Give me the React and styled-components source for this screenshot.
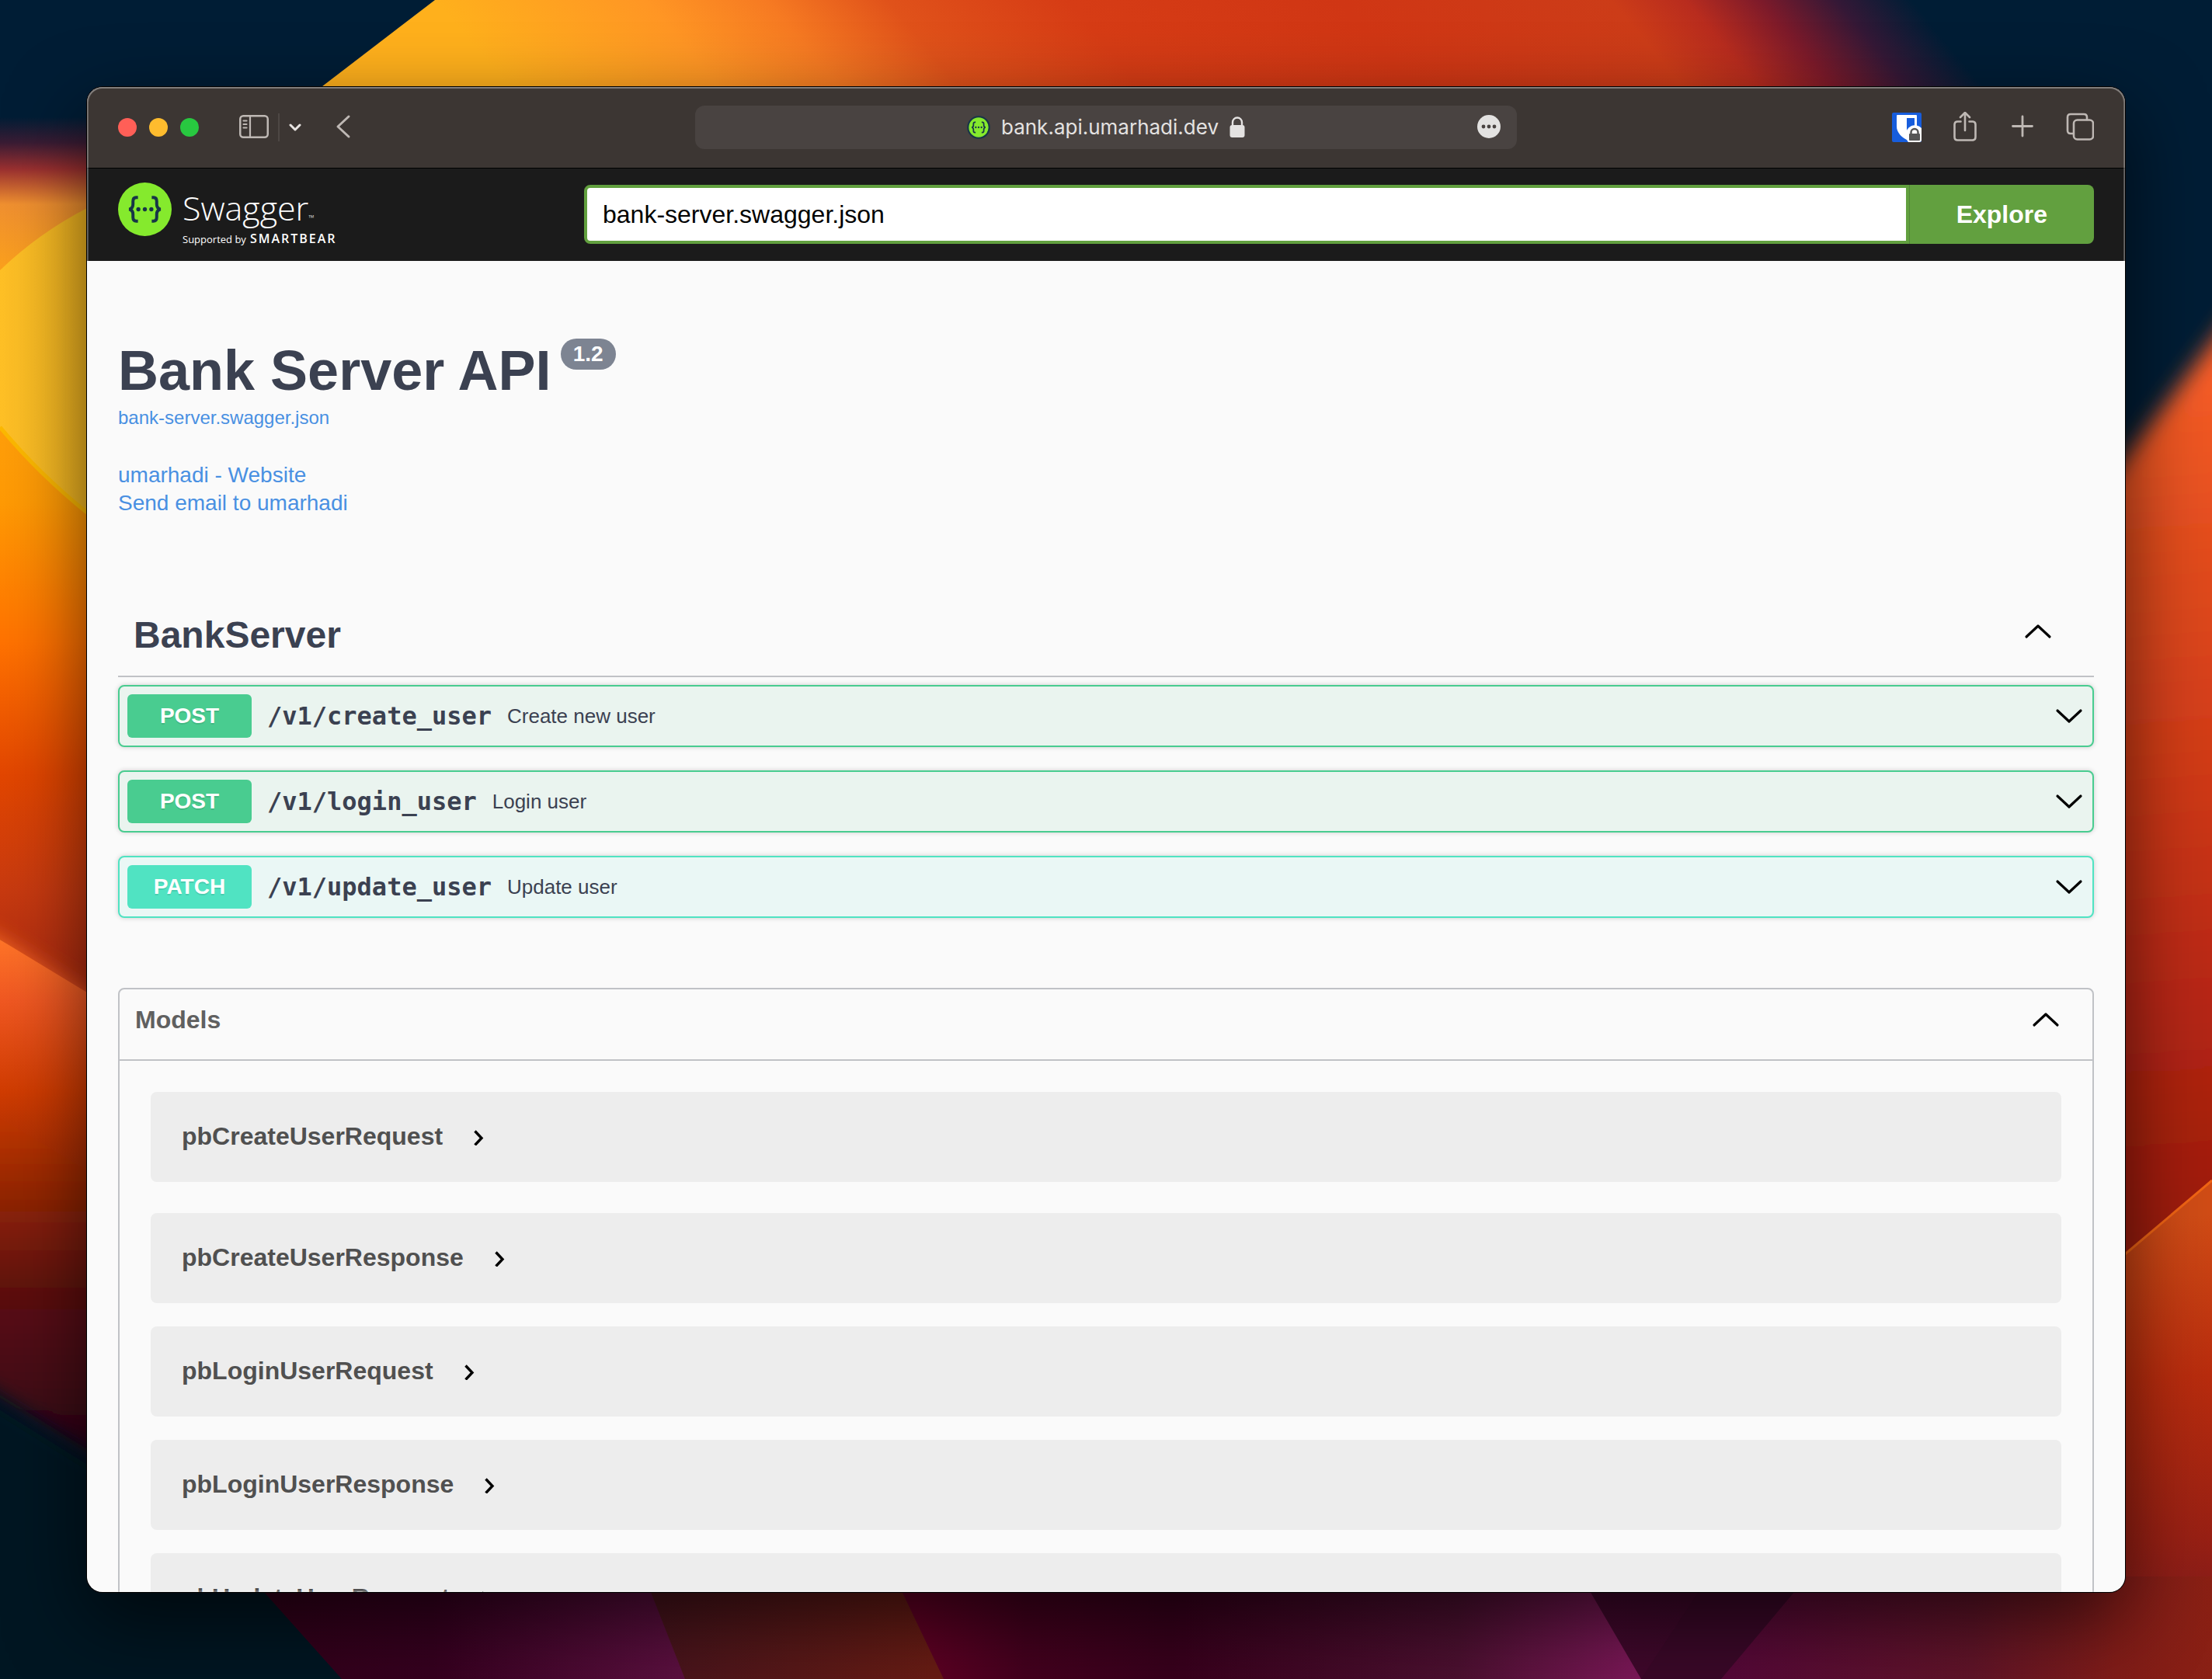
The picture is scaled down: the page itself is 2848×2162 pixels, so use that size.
import React from "react";
import styled, { createGlobalStyle } from "styled-components";

const sans = '"Liberation Sans", Arial, Helvetica, sans-serif';
const mono = '"DejaVu Sans Mono", Menlo, monospace';
const brand = '"Open Sans", "Noto Sans", sans-serif';

const GlobalStyle = createGlobalStyle`
  *, *::before, *::after { box-sizing: border-box; }
  body { margin: 0; background: #001d35; font-family: ${sans}; overflow: hidden; }
  h1, h2, h3 { margin: 0; }
  button { font: inherit; color: inherit; border: 0; padding: 0; background: none; cursor: pointer; }
  svg { display: block; flex: none; }
`;

/* ---------- desktop ---------- */

const Desktop = styled.div`
  position: relative;
  display: flex;
  height: 100vh;
  padding: 112px;
`;

const WallpaperArt = styled.svg`
  position: absolute;
  inset: 0;
  width: 100%;
  height: 100%;
`;

function Fade({ id, stops, ...rest }) {
  return (
    <linearGradient id={id} gradientUnits="userSpaceOnUse" {...rest}>
      {stops.map(([offset, color]) => (
        <stop key={offset} offset={offset} stopColor={color} />
      ))}
    </linearGradient>
  );
}

function Wallpaper() {
  return (
    <WallpaperArt viewBox="0 0 2848 2162" preserveAspectRatio="xMidYMid slice" aria-hidden="true">
      <defs>
        <Fade id="dune" x1="560" y1="0" x2="2500" y2="0" gradientTransform="skewX(40)"
          stops={[[0, "#ffb01c"], [0.14, "#ff9624"], [0.22, "#f67a22"], [0.3, "#e0521a"], [0.42, "#d63c15"], [0.6, "#d03614"], [0.78, "#cc3c18"], [0.83, "#b82c1e"], [0.88, "#7c1a2a"], [0.93, "#341836"], [0.98, "#001d35"]]} />
        <Fade id="west" x1="0" y1="150" x2="0" y2="1280"
          stops={[[0, "#001d35"], [0.03, "#3a1c34"], [0.06, "#9a3030"], [0.1, "#f09030"], [0.2, "#ffa616"], [0.44, "#ff9a04"], [0.6, "#ff7200"], [0.75, "#e24600"], [0.88, "#c83a10"], [1, "#a82810"]]} />
        <Fade id="gold" x1="0" y1="0" x2="130" y2="0" stops={[[0, "#ffc026"], [1, "#f0b420"]]} />
        <Fade id="westLow" x1="0" y1="1210" x2="0" y2="1860"
          stops={[[0, "#ff7428"], [0.12, "#f05822"], [0.3, "#d03c02"], [0.5, "#942604"], [0.7, "#5c1010"], [0.9, "#420818"], [1, "#300418"]]} />
        <Fade id="east" x1="2720" y1="500" x2="2800" y2="1600"
          stops={[[0, "#f45c26"], [0.2, "#e24c1e"], [0.45, "#d03a18"], [0.7, "#b82812"], [1, "#9a1a10"]]} />
        <Fade id="eastLow" x1="2740" y1="1570" x2="2780" y2="2162"
          stops={[[0, "#d04c16"], [0.35, "#b82c0e"], [0.7, "#982014"], [1, "#701820"]]} />
        <Fade id="plumA" x1="340" y1="0" x2="880" y2="0" stops={[[0, "#32001a"], [0.4, "#36001f"], [1, "#5c1040"]]} />
        <Fade id="rust" x1="850" y1="0" x2="1200" y2="0" stops={[[0, "#48141c"], [1, "#681c14"]]} />
        <Fade id="plumB" x1="1180" y1="0" x2="2110" y2="0"
          stops={[[0, "#600024"], [0.15, "#44001e"], [0.35, "#38001c"], [0.75, "#4c1030"], [1, "#7c1858"]]} />
        <Fade id="plumC" x1="2050" y1="0" x2="2300" y2="0" stops={[[0, "#40082c"], [1, "#3c0828"]]} />
        <Fade id="plumD" x1="2230" y1="0" x2="2848" y2="0"
          stops={[[0, "#560838"], [0.5, "#601428"], [0.8, "#801c18"], [1, "#8a2014"]]} />
        <filter id="soft" x="-20%" y="-20%" width="140%" height="140%">
          <feGaussianBlur stdDeviation="14" />
        </filter>
      </defs>
      <rect width="2848" height="2162" fill="#001d35" />
      <rect y="1500" width="1200" height="662" fill="#001524" />
      <path d="M560 0H2848V200H299z" fill="url(#dune)" />
      <path d="M0 150H600V1600L0 1210z" fill="url(#west)" />
      <path d="M0 348Q50 300 112 268L400 200V800L112 658Q50 610 0 550z" fill="url(#gold)" />
      <path d="M0 550Q50 610 112 660" fill="none" stroke="#fcb800" strokeWidth="5" />
      <path d="M-60 1180 0 1210 600 1574V2174L0 1800-60 1760z" fill="url(#westLow)" filter="url(#soft)" />
      <path d="M0 1210 600 1574V1800L0 1440z" fill="url(#westLow)" />
      <path d="M-60 1770 0 1806 112 1876 600 2180H-60z" fill="#001524" filter="url(#soft)" />
      <path d="M2600 770 2736 590 2848 440 2920 345V1700H2600z" fill="url(#east)" filter="url(#soft)" />
      <path d="M2600 1730 2736 1615 2848 1520V2162H2600z" fill="url(#eastLow)" />
      <path d="M2600 1730 2736 1615 2848 1520" fill="none" stroke="#f06414" strokeWidth="3" />
      <path d="M322 2030 440 2162H900V2030z" fill="url(#plumA)" />
      <path d="M830 2030 882 2162H1230V2030z" fill="url(#rust)" />
      <path d="M1152 2030 1215 2162H2120V2030z" fill="url(#plumB)" />
      <path d="M2036 2030 2113 2162H2240V2030z" fill="url(#plumC)" />
      <path d="M2200 2030H2330L2216 2162H2113z" fill="#3a0828" />
      <path d="M2327 2030 2216 2162H2848V2030z" fill="url(#plumD)" />
    </WallpaperArt>
  );
}

const BrowserWindow = styled.div`
  position: relative;
  flex: 1;
  min-width: 0;
  display: flex;
  flex-direction: column;
  overflow: hidden;
  border-radius: 20px;
  background: #fafafa;
  box-shadow: 0 0 0 1px #000, 0 36px 100px rgba(0, 0, 0, 0.62);

  &::after {
    content: "";
    position: absolute;
    inset: 0;
    border-radius: inherit;
    pointer-events: none;
    box-shadow: inset 0 0 0 2px rgba(255, 255, 255, 0.24), inset 0 1px 0 1px rgba(255, 255, 255, 0.15);
  }
`;

/* ---------- browser toolbar ---------- */

const Toolbar = styled.header`
  flex: none;
  display: grid;
  grid-template-columns: 1fr minmax(0, 1058px) 1fr;
  align-items: center;
  height: 104px;
  padding: 0 40px;
  background: #3c3633;
  color: #beb8b4;
`;

const ToolGroup = styled.div`
  display: flex;
  align-items: center;
  justify-content: ${(p) => (p.$end ? "flex-end" : "flex-start")};
  gap: ${(p) => p.$gap}px;
`;

const Light = styled.button`
  width: 24px;
  height: 24px;
  border-radius: 50%;
  background: ${(p) => p.$color};
`;

const SidebarTools = styled.div`
  display: flex;
  align-items: center;
  gap: 12px;
  margin: 0 28px 0 36px;
`;

const ToolDivider = styled.span`
  width: 2px;
  height: 36px;
  background: #4d4744;
`;

const AddressBar = styled.div`
  display: grid;
  grid-template-columns: 1fr auto 1fr;
  align-items: center;
  height: 56px;
  padding: 0 20px;
  border-radius: 12px;
  background: #494341;
  color: #e4e2e1;
`;

const Address = styled.div`
  grid-column: 2;
  display: flex;
  align-items: center;
  gap: 14px;
  font: 26px/32px Inter, Roboto, sans-serif;
`;

const MoreButton = styled.button`
  justify-self: end;
`;

function SwaggerMark({ size, ring }) {
  return (
    <svg width={size} height={size} viewBox="0 0 70 70" aria-hidden="true">
      <circle cx="35" cy="35" r={ring ? 32 : 35} fill="#85ea2d" stroke="#173647" strokeWidth={ring ? 5 : 0} />
      <g fill="none" stroke="#173647" strokeWidth="4">
        <path d="M26 19.500h-2q-4.500 0-4.500 5v4q0 5.500-5 6.500 5 1 5 6.500v4q0 5 4.500 5h2" />
        <path d="M44 19.500h2q4.500 0 4.500 5v4q0 5.500 5 6.500-5 1-5 6.500v4q0 5-4.500 5h-2" />
      </g>
      <g fill="#173647">
        <circle cx="26.500" cy="35" r="2.700" />
        <circle cx="35" cy="35" r="2.700" />
        <circle cx="43.500" cy="35" r="2.700" />
      </g>
    </svg>
  );
}

const LineIcon = styled.svg.attrs({
  fill: "none",
  stroke: "currentColor",
  strokeLinecap: "round",
  strokeLinejoin: "round",
  "aria-hidden": true,
})`
  color: ${(p) => p.$tone || "inherit"};
`;

function BrowserToolbar() {
  return (
    <Toolbar>
      <ToolGroup $gap={16}>
        <Light $color="#ff5f57" aria-label="Close" />
        <Light $color="#febc2e" aria-label="Minimize" />
        <Light $color="#28c840" aria-label="Zoom" />
        <SidebarTools>
          <button aria-label="Show sidebar">
            <LineIcon width="38" height="36" viewBox="0 0 38 36" strokeWidth="2.500">
              <rect x="1.250" y="3.250" width="35.500" height="27.500" rx="4" />
              <path d="M14 3.500v27M5.500 9.500h4M5.500 14h4M5.500 18.500h4" strokeWidth="2.200" />
            </LineIcon>
          </button>
          <ToolDivider />
          <button aria-label="Tab groups">
            <LineIcon width="16" height="16" viewBox="0 0 16 16" strokeWidth="3" $tone="#e8e4e2">
              <path d="m2 5 6 6 6-6" />
            </LineIcon>
          </button>
        </SidebarTools>
        <button aria-label="Back">
          <LineIcon width="20" height="36" viewBox="0 0 20 36" strokeWidth="3">
            <path d="M17 4 3 17l14 13" />
          </LineIcon>
        </button>
      </ToolGroup>
      <AddressBar>
        <Address>
          <SwaggerMark size={30} ring />
          <span>bank.api.umarhadi.dev</span>
          <svg width="20" height="30" viewBox="0 0 20 30" aria-hidden="true">
            <rect x="0.500" y="12" width="19" height="16" rx="3" fill="#e4e2e1" />
            <path d="M4 13V8.500a6 6 0 0 1 12 0V13" fill="none" stroke="#e4e2e1" strokeWidth="2.400" />
          </svg>
        </Address>
        <MoreButton aria-label="Page menu">
          <svg width="32" height="32" viewBox="0 0 32 32" aria-hidden="true">
            <circle cx="16" cy="15" r="15" fill="#e3e2e1" />
            <g fill="#494341">
              <circle cx="9" cy="15" r="2.400" />
              <circle cx="16" cy="15" r="2.400" />
              <circle cx="23" cy="15" r="2.400" />
            </g>
          </svg>
        </MoreButton>
      </AddressBar>
      <ToolGroup $gap={38} $end>
        <button aria-label="Password manager">
          <svg width="38" height="38" viewBox="0 0 38 38" aria-hidden="true">
            <rect width="38" height="38" rx="2" fill="#175ddc" />
            <path d="M7 3h24q1 0 1 1v14c0 8-7 14-13 17C13 32 6 26 6 18V4q0-1 1-1z" fill="#fff" />
            <path d="M19 7h10v11c0 6-6 10-10 12z" fill="#175ddc" />
            <path d="M38 20v15q0 3-3 3H21a12 12 0 0 1-3-9 11.500 11.500 0 0 1 20-9z" fill="#fff" />
            <rect x="22" y="27" width="14" height="9" rx="1" fill="#555" />
            <path d="M24.500 28v-2.500a4.500 4.500 0 0 1 9 0V28" fill="none" stroke="#555" strokeWidth="2.500" />
          </svg>
        </button>
        <button aria-label="Share">
          <LineIcon width="36" height="40" viewBox="0 0 36 40" strokeWidth="2.600">
            <path d="M12.500 12.500H8.500q-4 0-4 4v16q0 4 4 4h19q4 0 4-4v-16q0-4-4-4h-4M18 24V1.500M12 7l6-6 6 6" />
          </LineIcon>
        </button>
        <button aria-label="New tab">
          <LineIcon width="36" height="36" viewBox="0 0 36 36" strokeWidth="2.800">
            <path d="M18 4v25M5.500 16.500h25" />
          </LineIcon>
        </button>
        <button aria-label="Show tabs">
          <LineIcon width="36" height="38" viewBox="0 0 36 38" strokeWidth="2.600">
            <rect x="10" y="9.500" width="25" height="25" rx="4.500" />
            <path d="M9.500 27H6q-4 0-4-4V6q0-4 4-4h17q4 0 4 4v3" />
          </LineIcon>
        </button>
      </ToolGroup>
    </Toolbar>
  );
}

/* ---------- swagger top bar ---------- */

const Topbar = styled.div`
  flex: none;
  display: flex;
  align-items: center;
  height: 120px;
  padding: 0 40px;
  background: #1b1b1b;
  box-shadow: inset 0 1px 0 #000;
`;

const Logo = styled.a`
  flex: 0 0 600px;
  display: flex;
  align-items: flex-start;
  gap: 14px;
  color: #fff;
  text-decoration: none;
  font-family: ${brand};
`;

const LogoText = styled.span`
  display: flex;
  flex-direction: column;
  gap: 6px;
  padding-top: 9px;
`;

const LogoName = styled.span`
  font-size: 43px;
  line-height: 48px;
  font-weight: 300;

  small { font-size: 10px; line-height: 10px; }
`;

const LogoByline = styled.span`
  display: flex;
  align-items: baseline;
  gap: 5px;
  font-size: 13px;
  line-height: 18px;

  strong {
    font-size: 16px;
    line-height: 18px;
    font-weight: 600;
    letter-spacing: 2px;
  }
`;

const SpecForm = styled.form`
  flex: 1;
  min-width: 0;
  display: flex;
  height: 76px;
`;

const SpecInput = styled.input`
  flex: 1;
  min-width: 0;
  margin: 0;
  padding: 0 20px;
  border: 4px solid #62a03f;
  border-radius: 8px 0 0 8px;
  background: #fff;
  color: #000;
  font: 32px ${sans};
  outline: none;
`;

const ExploreButton = styled.button`
  padding: 0 60px;
  border-left: 1px solid #52883a;
  border-radius: 0 8px 8px 0;
  background: #62a03f;
  color: #fff;
  font: bold 32px ${sans};
`;

/* ---------- page ---------- */

const Page = styled.main`
  flex: 1;
  min-height: 0;
  overflow: hidden;
  padding: 100px 40px 0;
  color: #3b4151;
`;

const Info = styled.section`
  display: flex;
  flex-direction: column;
  align-items: flex-start;
  margin-bottom: 100px;
`;

const TitleRow = styled.div`
  display: flex;
  align-items: flex-start;
  gap: 12px;
`;

const Title = styled.h1`
  font-size: 72px;
  line-height: 82px;
`;

const Version = styled.span`
  padding: 0 16px;
  border-radius: 20px;
  background: #7d8492;
  color: #fff;
  font-size: 28px;
  font-weight: bold;
  line-height: 40px;
`;

const TextLink = styled.a`
  color: #4990e2;
  text-decoration: none;
  font-size: ${(p) => (p.$small ? 24 : 28)}px;
  line-height: ${(p) => (p.$small ? 28 : 36)}px;
`;

const Contact = styled.div`
  display: flex;
  flex-direction: column;
  align-items: flex-start;
  margin-top: 42px;
`;

const SpecLinkRow = styled.div`
  display: flex;
  margin-top: 6px;
`;

const TagHeader = styled.div`
  display: flex;
  align-items: center;
  justify-content: space-between;
  padding: 14px 52px 24px 20px;
  border-bottom: 2px solid rgba(59, 65, 81, 0.3);

  h2 {
    padding-top: 10px;
    font-size: 48px;
    line-height: 56px;
  }
`;

const Operations = styled.div`
  display: flex;
  flex-direction: column;
  gap: 30px;
  margin-top: 10px;
`;

const Operation = styled.button`
  display: flex;
  align-items: center;
  gap: 20px;
  height: 80px;
  padding: 0 10px;
  border: 2px solid ${(p) => p.$color};
  border-radius: 8px;
  background: ${(p) => p.$tint};
  box-shadow: 0 0 6px rgba(0, 0, 0, 0.19);
  text-align: left;
`;

const Method = styled.span`
  width: 160px;
  border-radius: 6px;
  background: ${(p) => p.$color};
  color: #fff;
  font-size: 28px;
  font-weight: bold;
  line-height: 56px;
  text-align: center;
  text-shadow: 0 2px 0 rgba(0, 0, 0, 0.1);
`;

const Path = styled.span`
  font: bold 32px/40px ${mono};
`;

const Summary = styled.span`
  flex: 1;
  font-size: 26px;
`;

const Models = styled.section`
  margin-top: 90px;
  border: 2px solid rgba(59, 65, 81, 0.3);
  border-radius: 8px;
`;

const ModelsHeader = styled.div`
  display: flex;
  align-items: center;
  justify-content: space-between;
  height: 92px;
  padding: 20px 40px 32px 20px;
  border-bottom: 2px solid rgba(59, 65, 81, 0.3);

  h2 {
    color: #606060;
    font-size: 32px;
    line-height: 38px;
  }
`;

const ModelList = styled.div`
  display: flex;
  flex-direction: column;
  gap: 30px;
  padding: 40px;
`;

const Model = styled.div`
  padding: 37px 40px 39px;
  border-radius: 8px;
  background: #ededed;

  &:first-child { margin-bottom: 10px; }

  button {
    display: flex;
    align-items: center;
    gap: 38px;
    color: #505050;
    font-size: 32px;
    font-weight: bold;
    line-height: 40px;
  }
`;

function Chevron({ up }) {
  return (
    <LineIcon width="40" height="40" viewBox="0 0 40 40" strokeWidth="3.200" $tone="#000">
      <path d={up ? "M5 27 20 13l15 14" : "M5 13l15 14 15-14"} />
    </LineIcon>
  );
}

function ModelArrow() {
  return (
    <svg width="16" height="24" viewBox="0 0 16 24" aria-hidden="true">
      <path d="M3.500 5.500 12 14.500l-8.500 9" fill="none" stroke="#000" strokeWidth="3.400" />
    </svg>
  );
}

const palette = {
  POST: { color: "#49cc90", tint: "#eaf4ef" },
  PATCH: { color: "#50e3c2", tint: "#eaf7f5" },
};

const operations = [
  { method: "POST", path: "/v1/create_user", summary: "Create new user" },
  { method: "POST", path: "/v1/login_user", summary: "Login user" },
  { method: "PATCH", path: "/v1/update_user", summary: "Update user" },
];

const models = [
  "pbCreateUserRequest",
  "pbCreateUserResponse",
  "pbLoginUserRequest",
  "pbLoginUserResponse",
  "pbUpdateUserRequest",
];

export default function App() {
  return (
    <Desktop>
      <GlobalStyle />
      <Wallpaper />
      <BrowserWindow>
        <BrowserToolbar />
        <Topbar>
          <Logo href="#" aria-label="Swagger">
            <SwaggerMark size={69} />
            <LogoText>
              <LogoName>Swagger<small>™</small></LogoName>
              <LogoByline>Supported by <strong>SMARTBEAR</strong></LogoByline>
            </LogoText>
          </Logo>
          <SpecForm onSubmit={(e) => e.preventDefault()}>
            <SpecInput type="text" aria-label="Specification URL" defaultValue="bank-server.swagger.json" />
            <ExploreButton type="submit">Explore</ExploreButton>
          </SpecForm>
        </Topbar>
        <Page>
          <Info>
            <TitleRow>
              <Title>Bank Server API</Title>
              <Version>1.2</Version>
            </TitleRow>
            <SpecLinkRow>
              <TextLink href="#spec" $small>bank-server.swagger.json</TextLink>
            </SpecLinkRow>
            <Contact>
              <TextLink href="#website">umarhadi - Website</TextLink>
              <TextLink href="#email">Send email to umarhadi</TextLink>
            </Contact>
          </Info>
          <section>
            <TagHeader>
              <h2>BankServer</h2>
              <button aria-label="Collapse BankServer"><Chevron up /></button>
            </TagHeader>
            <Operations>
              {operations.map(({ method, path, summary }) => (
                <Operation key={path} $color={palette[method].color} $tint={palette[method].tint}>
                  <Method $color={palette[method].color}>{method}</Method>
                  <Path>{path}</Path>
                  <Summary>{summary}</Summary>
                  <Chevron />
                </Operation>
              ))}
            </Operations>
          </section>
          <Models>
            <ModelsHeader>
              <h2>Models</h2>
              <button aria-label="Collapse models"><Chevron up /></button>
            </ModelsHeader>
            <ModelList>
              {models.map((name) => (
                <Model key={name}>
                  <button>{name}<ModelArrow /></button>
                </Model>
              ))}
            </ModelList>
          </Models>
        </Page>
      </BrowserWindow>
    </Desktop>
  );
}
